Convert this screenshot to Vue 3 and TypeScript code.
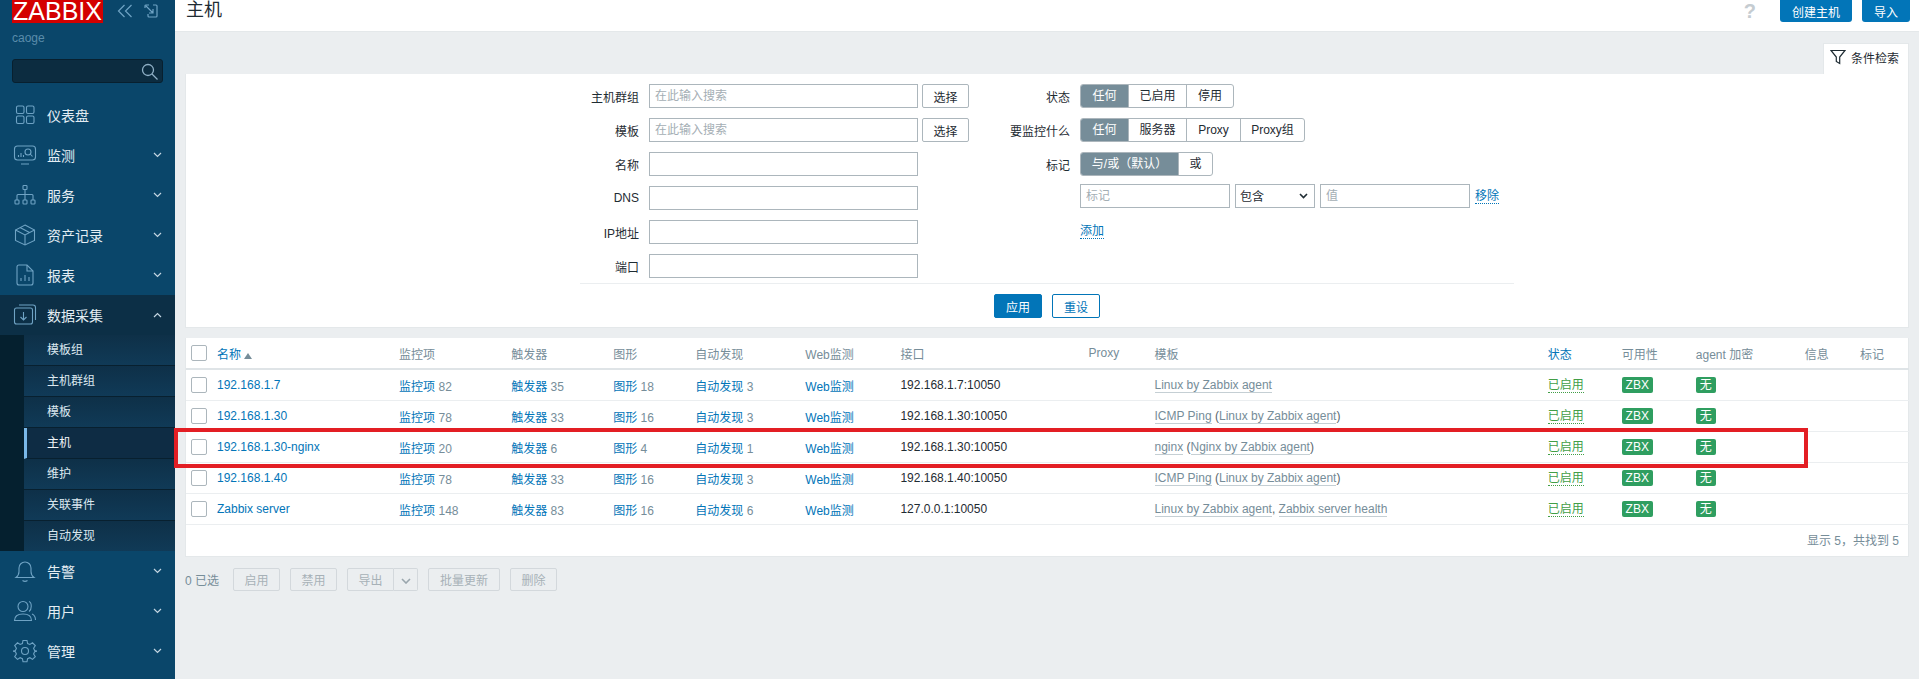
<script setup lang="ts">
interface MenuItem {
  label: string
  icon: string
  chevron: 'down' | 'up' | ''
  open?: boolean
}

interface TplPart {
  text: string
  link?: boolean
}

interface HostRow {
  name: string
  items: number
  triggers: number
  graphs: number
  discovery: number
  iface: string
  tpl: TplPart[]
}

const topMenu: MenuItem[] = [
  { label: '仪表盘', icon: 'dashboard', chevron: '' },
  { label: '监测', icon: 'monitor', chevron: 'down' },
  { label: '服务', icon: 'services', chevron: 'down' },
  { label: '资产记录', icon: 'inventory', chevron: 'down' },
  { label: '报表', icon: 'reports', chevron: 'down' },
  { label: '数据采集', icon: 'data', chevron: 'up', open: true },
]

const subMenu = ['模板组', '主机群组', '模板', '主机', '维护', '关联事件', '自动发现']

const bottomMenu: MenuItem[] = [
  { label: '告警', icon: 'bell', chevron: 'down' },
  { label: '用户', icon: 'users', chevron: 'down' },
  { label: '管理', icon: 'gear', chevron: 'down' },
]

const linuxAgent = 'Linux by Zabbix agent'

const rows: HostRow[] = [
  { name: '192.168.1.7', items: 82, triggers: 35, graphs: 18, discovery: 3, iface: '192.168.1.7:10050', tpl: [{ text: linuxAgent, link: true }] },
  { name: '192.168.1.30', items: 78, triggers: 33, graphs: 16, discovery: 3, iface: '192.168.1.30:10050', tpl: [{ text: 'ICMP Ping', link: true }, { text: ' (' }, { text: linuxAgent, link: true }, { text: ')' }] },
  { name: '192.168.1.30-nginx', items: 20, triggers: 6, graphs: 4, discovery: 1, iface: '192.168.1.30:10050', tpl: [{ text: 'nginx', link: true }, { text: ' (' }, { text: 'Nginx by Zabbix agent', link: true }, { text: ')' }] },
  { name: '192.168.1.40', items: 78, triggers: 33, graphs: 16, discovery: 3, iface: '192.168.1.40:10050', tpl: [{ text: 'ICMP Ping', link: true }, { text: ' (' }, { text: linuxAgent, link: true }, { text: ')' }] },
  { name: 'Zabbix server', items: 148, triggers: 83, graphs: 16, discovery: 6, iface: '127.0.0.1:10050', tpl: [{ text: linuxAgent, link: true }, { text: ', ' }, { text: 'Zabbix server health', link: true }] },
]

const colWidths = [31, 182, 112, 102, 82, 110, 95, 188, 66, 393, 74, 74, 109, 55, 49]
</script>

<template>
  <div class="page">
    <aside class="sidebar">
      <div class="brand">
        <div class="logo">ZABBIX</div>
        <div class="brand-tools">
          <svg width="16" height="14" viewBox="0 0 16 14" fill="none" stroke="#6fa3c4" stroke-width="1.2">
            <path d="M7.5 1 1.5 7l6 6M14.5 1l-6 6 6 6" />
          </svg>
          <svg width="14" height="14" viewBox="0 0 14 14" fill="none" stroke="#6fa3c4" stroke-width="1.2">
            <path d="M1 4V2a1 1 0 0 1 1-1h3M9 1h3a1 1 0 0 1 1 1v10a1 1 0 0 1-1 1H5a1 1 0 0 1-1-1V10M2 2l7 7M9 5v4H5" />
          </svg>
        </div>
      </div>
      <div class="user">caoge</div>
      <div class="search">
        <svg width="17" height="17" viewBox="0 0 17 17" fill="none" stroke="#8fb0c6" stroke-width="1.3">
          <circle cx="7" cy="7" r="5.5" />
          <path d="m11 11 5.5 5.5" />
        </svg>
      </div>

      <nav class="menu">
        <template v-for="m in topMenu" :key="m.label">
          <div :class="['menu-item', { open: m.open }]">
            <svg class="menu-icon" width="24" height="24" viewBox="0 0 24 24" fill="none" stroke="#6fa3c4" stroke-width="1.1">
              <g v-if="m.icon === 'dashboard'">
                <rect x="3.5" y="3" width="7.5" height="7.5" rx="1.5" />
                <rect x="13.5" y="3" width="7.5" height="7.5" rx="1.5" />
                <rect x="3.5" y="13" width="7.5" height="7.5" rx="1.5" />
                <rect x="13.5" y="13" width="7.5" height="7.5" rx="1.5" />
              </g>
              <g v-else-if="m.icon === 'monitor'">
                <rect x="1.5" y="3" width="21" height="14" rx="3" />
                <path d="M8 21h8M5.500 14v-2M8 14v-4M10.500 14v-2" />
                <circle cx="15" cy="9" r="3" />
                <path d="m17.200 11 2.300 2.500" />
              </g>
              <g v-else-if="m.icon === 'services'">
                <rect x="10" y="2.500" width="4" height="4" rx="0.8" />
                <rect x="2" y="17" width="4" height="4" rx="0.8" />
                <rect x="10" y="17" width="4" height="4" rx="0.8" />
                <rect x="18" y="17" width="4" height="4" rx="0.8" />
                <path d="M12 6.500V17M4 17v-4.500a1 1 0 0 1 1-1h14a1 1 0 0 1 1 1V17" />
              </g>
              <g v-else-if="m.icon === 'inventory'">
                <path d="M12 2 21.500 7v10.500L12 22l-9.500-4.500V7L12 2Z" />
                <path d="M2.500 7 12 12l9.500-5M12 12v10M7 4.500 16.500 9.500" />
              </g>
              <g v-else-if="m.icon === 'reports'">
                <path d="M6 2h8l6 6v12a2 2 0 0 1-2 2H6a2 2 0 0 1-2-2V4a2 2 0 0 1 2-2Z" />
                <path d="M14 2v6h6M8 18v-3M12 18v-6M16 18v-4" />
              </g>
              <g v-else-if="m.icon === 'data'">
                <rect x="1.500" y="5" width="18" height="16" rx="2" />
                <path d="M6 2h14a2.500 2.500 0 0 1 2.500 2.500V17M10.500 9v8M7.500 14l3 3 3-3" />
              </g>
            </svg>
            <span class="menu-label">{{ m.label }}</span>
            <svg v-if="m.chevron" class="chevron" width="9" height="6" viewBox="0 0 9 6" fill="none" stroke="#c4d6e2" stroke-width="1.2">
              <path :d="m.chevron === 'up' ? 'M1 5l3.500-3.500L8 5' : 'M1 1l3.500 3.500L8 1'" />
            </svg>
          </div>
        </template>

        <ul class="submenu">
          <li v-for="s in subMenu" :key="s" :class="{ active: s === '主机' }">{{ s }}</li>
        </ul>

        <div v-for="m in bottomMenu" :key="m.label" class="menu-item">
          <svg class="menu-icon" width="24" height="24" viewBox="0 0 24 24" fill="none" stroke="#6fa3c4" stroke-width="1.1">
            <g v-if="m.icon === 'bell'">
              <path d="M3 18.500c2-1.500 3-3 3-6V9a6 6 0 0 1 12 0v3.500c0 3 1 4.500 3 6H3ZM9.500 21.500c1.500 1 3.500 1 5 0" />
            </g>
            <g v-else-if="m.icon === 'users'">
              <circle cx="10" cy="7.500" r="5" />
              <path d="M1.500 21.500c0-4.500 3.500-6.500 8.500-6.500s8.500 2 8.500 6.500h-17ZM16 2.500c3 1 3 8 0 10M19 15c2.500 1 3.500 3 3.500 6" />
            </g>
            <g v-else-if="m.icon === 'gear'">
              <circle cx="12" cy="12" r="3.500" />
              <path d="M10 1.500h4l.6 3 2.300 1 2.600-1.700 2.800 2.800-1.700 2.600 1 2.300 2.900.6v0l-2.900.6-1 2.300 1.700 2.600-2.800 2.800-2.600-1.700-2.300 1-.6 3h-4l-.6-3-2.300-1-2.600 1.700-2.800-2.800 1.700-2.600-1-2.300-2.900-.6v0l2.900-.6 1-2.300L1.700 6.600l2.800-2.800 2.600 1.700 2.300-1 .6-3Z" />
            </g>
          </svg>
          <span class="menu-label">{{ m.label }}</span>
          <svg class="chevron" width="9" height="6" viewBox="0 0 9 6" fill="none" stroke="#c4d6e2" stroke-width="1.2">
            <path d="M1 1l3.500 3.500L8 1" />
          </svg>
        </div>
      </nav>
    </aside>

    <main class="main">
      <header class="topbar">
        <h1 class="title">主机</h1>
        <div class="top-actions">
          <span class="help">?</span>
          <button class="btn-top create">创建主机</button>
          <button class="btn-top import">导入</button>
        </div>
      </header>

      <div class="content">
        <div class="filter-tabs">
          <div class="filter-tab">
            <svg width="16" height="16" viewBox="0 0 16 16" fill="none" stroke="#1f2c33" stroke-width="1.2">
              <path d="M1 1.500h14L9.700 8v6.500L6.300 12.500V8L1 1.500Z" />
            </svg>
            <span>条件检索</span>
          </div>
        </div>

        <section class="filter">
          <div class="filter-form">
            <div class="col-left">
              <label>主机群组</label>
              <input class="text" placeholder="在此输入搜索" />
              <button class="btn-select">选择</button>
              <label>模板</label>
              <input class="text" placeholder="在此输入搜索" />
              <button class="btn-select">选择</button>
              <label>名称</label>
              <input class="text" />
              <span></span>
              <label>DNS</label>
              <input class="text" />
              <span></span>
              <label>IP地址</label>
              <input class="text" />
              <span></span>
              <label>端口</label>
              <input class="text" />
              <span></span>
            </div>
            <div class="col-right">
              <label>状态</label>
              <div class="seg">
                <span class="on w48">任何</span><span class="w58">已启用</span><span class="w47">停用</span>
              </div>
              <label>要监控什么</label>
              <div class="seg">
                <span class="on w48">任何</span><span class="w58">服务器</span><span class="w54">Proxy</span><span class="w65">Proxy组</span>
              </div>
              <label>标记</label>
              <div class="seg">
                <span class="on w98">与/或（默认）</span><span class="w35">或</span>
              </div>
              <span></span>
              <div class="tag-row">
                <input class="tag-input" placeholder="标记" />
                <div class="fake-select">
                  <span>包含</span>
                  <svg width="9" height="6" viewBox="0 0 9 6" fill="none" stroke="#1f2c33" stroke-width="1.6">
                    <path d="M1 1l3.500 3.500L8 1" />
                  </svg>
                </div>
                <input class="tag-input" placeholder="值" />
                <a class="dotted">移除</a>
              </div>
              <span></span>
              <div class="add-row"><a class="dotted">添加</a></div>
            </div>
          </div>
          <div class="filter-foot">
            <button class="btn-apply">应用</button>
            <button class="btn-reset">重设</button>
          </div>
        </section>

        <section class="hosts">
          <table>
            <colgroup>
              <col v-for="(w, i) in colWidths" :key="i" :style="{ width: w + 'px' }" />
            </colgroup>
            <thead>
              <tr>
                <th class="cell-check"><input type="checkbox" class="check" /></th>
                <th class="sort">名称 <i class="arrow-up"></i></th>
                <th>监控项</th>
                <th>触发器</th>
                <th>图形</th>
                <th>自动发现</th>
                <th>Web监测</th>
                <th>接口</th>
                <th>Proxy</th>
                <th>模板</th>
                <th class="sort">状态</th>
                <th>可用性</th>
                <th>agent 加密</th>
                <th>信息</th>
                <th>标记</th>
              </tr>
            </thead>
            <tbody>
              <tr v-for="r in rows" :key="r.name">
                <td class="cell-check"><input type="checkbox" class="check" /></td>
                <td><a class="link">{{ r.name }}</a></td>
                <td><a class="link">监控项</a> <span class="count">{{ r.items }}</span></td>
                <td><a class="link">触发器</a> <span class="count">{{ r.triggers }}</span></td>
                <td><a class="link">图形</a> <span class="count">{{ r.graphs }}</span></td>
                <td><a class="link">自动发现</a> <span class="count">{{ r.discovery }}</span></td>
                <td><a class="link">Web监测</a></td>
                <td class="iface">{{ r.iface }}</td>
                <td></td>
                <td class="tpl">
                  <template v-for="(p, i) in r.tpl" :key="i">
                    <span :class="{ 'tpl-link': p.link }">{{ p.text }}</span>
                  </template>
                </td>
                <td><a class="status">已启用</a></td>
                <td><span class="badge zbx">ZBX</span></td>
                <td><span class="badge none">无</span></td>
                <td></td>
                <td></td>
              </tr>
            </tbody>
          </table>
          <div class="table-foot">显示 5，共找到 5</div>
        </section>

        <div class="actions">
          <span class="selected">0 已选</span>
          <button class="btn-off w47">启用</button>
          <button class="btn-off w47">禁用</button>
          <div class="split">
            <button class="btn-off w47 left">导出</button>
            <button class="btn-off arrow">
              <svg width="10" height="6" viewBox="0 0 10 6" fill="none" stroke="#9aa6ad" stroke-width="1.6">
                <path d="M1 1l4 4 4-4" />
              </svg>
            </button>
          </div>
          <button class="btn-off w72">批量更新</button>
          <button class="btn-off w47">删除</button>
        </div>
      </div>
    </main>

    <div class="highlight"></div>
  </div>
</template>

<style>
html,
body {
  margin: 0;
  background: #ebeef0;
}
</style>

<style scoped>
.page {
  position: relative;
  display: flex;
  width: 1919px;
  height: 679px;
  overflow: hidden;
  font-family: "Liberation Sans", "Noto Sans CJK SC", sans-serif;
  font-size: 12px;
  color: #1f2c33;
  background: #ebeef0;
}

/* sidebar */
.sidebar {
  flex: 0 0 175px;
  display: flex;
  flex-direction: column;
  background: #0a466a;
}

.brand {
  display: flex;
  align-items: flex-start;
  justify-content: space-between;
  padding: 0 17px 0 12px;
}

.logo {
  width: 91px;
  height: 23px;
  background: #d40000;
  color: #fff;
  font-size: 25px;
  line-height: 22px;
  text-align: center;
}

.brand-tools {
  display: flex;
  gap: 11px;
  padding-top: 4px;
}

.user {
  margin: 7px 12px 0;
  height: 16px;
  line-height: 16px;
  color: #5a8cab;
}

.search {
  display: flex;
  align-items: center;
  justify-content: flex-end;
  box-sizing: border-box;
  margin: 13px 12px 12px;
  width: 151px;
  height: 24px;
  padding-right: 4px;
  background: #0c2c40;
  border: 1px solid #08202f;
  border-radius: 3px;
}

.menu-item {
  display: flex;
  align-items: center;
  height: 40px;
  padding: 0 13px;
  color: #e3edf3;
  font-size: 14px;
}

.menu-item.open {
  background: #0c2f46;
}

.menu-icon {
  flex: none;
  margin-right: 10px;
}

.menu-label {
  flex: 1;
}

.chevron {
  margin-right: 0;
}

.submenu {
  margin: 0;
  padding: 0 0 0 24px;
  list-style: none;
  background: #05202f;
}

.submenu li {
  box-sizing: border-box;
  height: 31px;
  line-height: 30px;
  padding-left: 23px;
  color: #dce8ef;
  font-size: 12px;
  background: linear-gradient(#0e3048, #103a57);
  border-bottom: 1px solid #08202f;
}

.submenu li:last-child {
  height: 30px;
  border-bottom: 0;
}

.submenu li.active {
  padding-left: 20px;
  background: #0e2c44;
  border-left: 3px solid #7ab8e8;
  color: #f0f5f8;
}

/* main */
.main {
  flex: 1;
  min-width: 0;
  display: flex;
  flex-direction: column;
}

.topbar {
  display: flex;
  align-items: flex-start;
  justify-content: space-between;
  height: 32px;
  padding: 0 9px 0 11px;
  background: #fff;
  border-bottom: 1px solid #e4e8ea;
  box-sizing: border-box;
}

.title {
  margin: 0;
  font-size: 18px;
  font-weight: 400;
  line-height: 20px;
  color: #1f2c33;
}

.top-actions {
  display: flex;
  align-items: flex-start;
  gap: 10px;
}

.help {
  margin-right: 14px;
  font-size: 20px;
  font-weight: 700;
  line-height: 22px;
  color: #c5ccd1;
}

.btn-top {
  height: 22px;
  border: 0;
  border-radius: 0 0 3px 3px;
  background: #0275b8;
  color: #fff;
  font: inherit;
  padding: 0;
}

.btn-top.create {
  width: 72px;
}

.btn-top.import {
  width: 48px;
}

.content {
  padding: 0 10px;
}

.filter-tabs {
  display: flex;
  justify-content: flex-end;
  margin-top: 11px;
}

.filter-tab {
  display: flex;
  align-items: center;
  gap: 5px;
  box-sizing: border-box;
  width: 86px;
  height: 31px;
  padding: 0 0 4px 6px;
  background: #fff;
  border: 1px solid #e4e8ea;
  border-bottom: 0;
}

.filter {
  box-sizing: border-box;
  height: 254px;
  padding-top: 10px;
  background: #fff;
  border: 1px solid #e4e8ea;
  border-top: 0;
}

.filter-form {
  display: flex;
  height: 199px;
}

.col-left {
  display: grid;
  grid-template-columns: 463px 269px 51px;
  grid-auto-rows: 24px;
  row-gap: 10px;
  align-items: center;
}

.col-left label,
.col-right label {
  padding-right: 10px;
  text-align: right;
}

.text {
  box-sizing: border-box;
  width: 269px;
  height: 24px;
  padding: 0 5px;
  border: 1px solid #acb6bc;
  background: #fff;
  font: inherit;
  outline: none;
}

.text::placeholder,
.tag-input::placeholder {
  color: #a4aeb4;
}

.btn-select {
  box-sizing: border-box;
  width: 47px;
  height: 24px;
  margin-left: 4px;
  padding: 0;
  border: 1px solid #acb6bc;
  border-radius: 2px;
  background: #fff;
  color: #1f2c33;
  font: inherit;
}

.col-right {
  display: grid;
  grid-template-columns: 111px auto;
  grid-template-rows: 24px 24px 24px 24px 24px;
  row-gap: 10px;
  align-items: center;
  align-content: start;
  font-size: 12px;
}

.col-right > :nth-child(n + 7) {
  margin-top: -4px;
}

.col-right > :nth-child(n + 9) {
  margin-top: -2px;
}

.seg {
  display: flex;
  width: max-content;
  height: 24px;
  box-sizing: border-box;
  border: 1px solid #acb6bc;
  border-radius: 3px;
  overflow: hidden;
}

.seg span {
  box-sizing: border-box;
  line-height: 22px;
  text-align: center;
  border-left: 1px solid #acb6bc;
}

.seg span:first-child {
  border-left: 0;
}

.seg .on {
  background: #768d99;
  color: #fff;
}

.w47 {
  width: 47px;
}

.w48 {
  width: 47px;
}

.w58 {
  width: 58px;
}

.w54 {
  width: 54px;
}

.w65 {
  width: 64px;
}

.w98 {
  width: 97px;
}

.w35 {
  width: 34px;
}

.w72 {
  width: 72px;
}

.tag-row {
  display: flex;
  align-items: center;
}

.tag-input {
  box-sizing: border-box;
  width: 150px;
  height: 24px;
  padding: 0 5px;
  border: 1px solid #acb6bc;
  font: inherit;
  outline: none;
}

.fake-select {
  display: flex;
  align-items: center;
  justify-content: space-between;
  box-sizing: border-box;
  width: 80px;
  height: 24px;
  margin: -1px 5px 0;
  padding: 0 6px 0 4px;
  border: 1px solid #acb6bc;
  background: #fff;
}

.dotted {
  margin-left: 5px;
  color: #0275b8;
  border-bottom: 1px dotted #0275b8;
  line-height: 14px;
}

.add-row .dotted {
  margin-left: 0;
}

.filter-foot {
  display: flex;
  justify-content: center;
  gap: 10px;
  width: 934px;
  margin: 0 auto;
  padding-top: 10px;
  border-top: 1px solid #ebeef0;
}

.btn-apply,
.btn-reset {
  box-sizing: border-box;
  width: 48px;
  height: 24px;
  padding: 0;
  border: 1px solid #0275b8;
  border-radius: 2px;
  font: inherit;
}

.btn-apply {
  background: #0275b8;
  color: #fff;
}

.btn-reset {
  background: #fff;
  color: #0275b8;
}

/* table */
.hosts {
  margin-top: 10px;
  background: #fff;
  border: 1px solid #e4e8ea;
  border-top: 0;
  box-sizing: border-box;
  height: 219px;
}

table {
  width: 1723px;
  table-layout: fixed;
  border-collapse: collapse;
}

th {
  height: 30px;
  padding: 0;
  font-weight: 400;
  text-align: left;
  color: #768d99;
  border-bottom: 2px solid #dfe4e7;
}

th.sort {
  color: #0275b8;
}

td {
  height: 30px;
  padding: 0;
  border-bottom: 1px solid #ebeef0;
  white-space: nowrap;
}

.cell-check {
  padding-left: 5px;
}

.check {
  appearance: none;
  display: block;
  box-sizing: border-box;
  width: 16px;
  height: 16px;
  margin: 0;
  background: #fff;
  border: 1px solid #acb6bc;
  border-radius: 2px;
}

.arrow-up {
  display: inline-block;
  border-left: 4px solid transparent;
  border-right: 4px solid transparent;
  border-bottom: 6px solid #768d99;
}

.link {
  color: #0275b8;
}

.count {
  color: #768d99;
}

.iface {
  color: #1f2c33;
}

.tpl {
  color: #59666d;
}

.tpl-link {
  color: #768d99;
  border-bottom: 1px solid #c5cfd4;
}

.status {
  color: #429e47;
  border-bottom: 1px dotted #429e47;
  line-height: 14px;
}

.badge {
  display: block;
  box-sizing: border-box;
  height: 16px;
  line-height: 16px;
  text-align: center;
  color: #fff;
  background: #2f9e60;
  border-radius: 2px;
}

.zbx {
  width: 31px;
}

.none {
  width: 20px;
}

.table-foot {
  height: 33px;
  line-height: 32px;
  padding-right: 9px;
  text-align: right;
  color: #768d99;
}

/* bottom actions */
.actions {
  display: flex;
  align-items: center;
  gap: 10px;
  margin-top: 11px;
  height: 23px;
}

.selected {
  width: 38px;
  color: #768d99;
}

.btn-off {
  box-sizing: border-box;
  height: 23px;
  padding: 0;
  background: #ebeef0;
  border: 1px solid #d3d8dc;
  border-radius: 2px;
  color: #a7b1b7;
  font: inherit;
}

.split {
  display: flex;
}

.btn-off.left {
  border-radius: 2px 0 0 2px;
}

.btn-off.arrow {
  width: 24px;
  border-left: 0;
  border-radius: 0 2px 2px 0;
}

/* annotation drawn over the screenshot */
.highlight {
  position: absolute;
  left: 174px;
  top: 428px;
  box-sizing: border-box;
  width: 1634px;
  height: 40px;
  border: 4px solid #e31e24;
  pointer-events: none;
}
</style>
